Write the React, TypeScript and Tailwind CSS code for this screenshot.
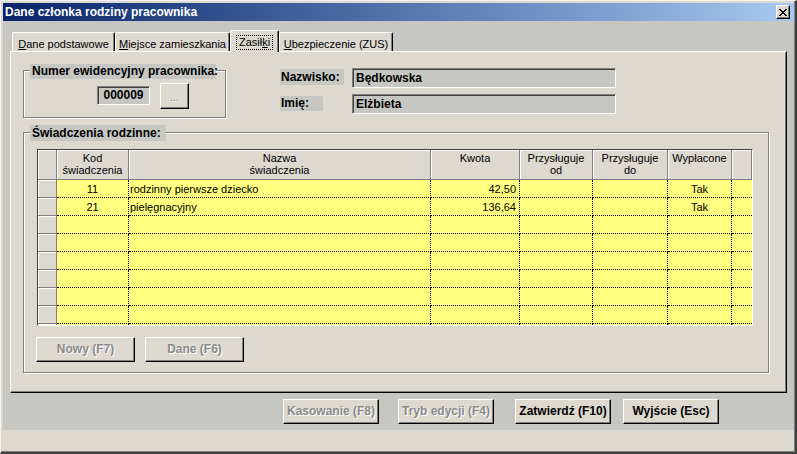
import React from "react";

type Row = { kod?: string; nazwa?: string; kwota?: string; od?: string; dd?: string; wyp?: string };

const rows: Row[] = [
  { kod: "11", nazwa: "rodzinny pierwsze dziecko", kwota: "42,50", wyp: "Tak" },
  { kod: "21", nazwa: "pielęgnacyjny", kwota: "136,64", wyp: "Tak" },
  {},
  {},
  {},
  {},
  {},
  {},
  {},
];

const headers: { w: string; lines: string[] }[] = [
  { w: "w-[19px]", lines: [] },
  { w: "w-[72px]", lines: ["Kod", "świadczenia"] },
  { w: "w-[302px]", lines: ["Nazwa", "świadczenia"] },
  { w: "w-[89px]", lines: ["Kwota"] },
  { w: "w-[73px]", lines: ["Przysługuje", "od"] },
  { w: "w-[75px]", lines: ["Przysługuje", "do"] },
  { w: "w-[64px]", lines: ["Wypłacone"] },
  { w: "w-[20px]", lines: [] },
];

const raised =
  "bg-[#ddd9d1] border border-t-white border-l-white border-r-black border-b-black shadow-[inset_-1px_-1px_0_#808080]";
const sunken =
  "bg-[#c6c7c3] border border-t-[#808080] border-l-[#808080] border-r-white border-b-white shadow-[inset_1px_1px_0_#404040]";
const frame =
  "border border-t-[#808080] border-l-[#808080] border-r-[#808080] border-b-[#808080] shadow-[1px_1px_0_#fff,inset_1px_1px_0_#fff]";

function Btn({ label, cls, disabled }: { label: string; cls: string; disabled?: boolean }) {
  return (
    <div
      className={`${cls} h-[25px] shrink-0 ${raised} font-bold text-[12px] leading-[23px] text-center whitespace-nowrap ${
        disabled ? "text-[#8a8a8a] [text-shadow:1px_1px_0_#fff]" : "text-black"
      }`}
    >
      {label}
    </div>
  );
}

function Tab({ children, cls }: { children: React.ReactNode; cls: string }) {
  return (
    <div
      className={`${cls} h-[19px] shrink-0 bg-[#ddd9d1] border-t border-l border-r border-t-white border-l-white border-r-black shadow-[inset_-1px_0_0_#808080] rounded-t-[2px] flex justify-center pt-[5px] leading-[13px] whitespace-nowrap`}
    >
      {children}
    </div>
  );
}

function DataCell({ w, last, children, align }: { w: string; last?: boolean; children?: React.ReactNode; align: string }) {
  return (
    <div
      className={`${w} h-[18px] shrink-0 overflow-hidden whitespace-nowrap leading-[19px] border-b border-dotted border-b-black ${
        last ? "" : "border-r border-r-black"
      } ${align}`}
    >
      {children}
    </div>
  );
}

export default function App() {
  return (
    <div className="w-[797px] h-[454px] overflow-hidden bg-[#ddd9d1] border-t border-l border-t-[#f6f4f0] border-l-[#f6f4f0] border-r-2 border-b-2 border-r-[#404040] border-b-[#404040] font-['Liberation_Sans',Arial,sans-serif] text-[11px] text-black">
      <div className="h-full flex flex-col border-r border-b border-r-[#808080] border-b-[#808080] pl-[2px] pt-[2px]">
        {/* Title bar */}
        <div className="h-[18px] shrink-0 flex items-center bg-linear-to-r from-[#0a246a] to-[#a6caf0] pl-[2px] pr-[4px]">
          <span className="flex-1 text-white font-bold text-[12px] leading-[18px] whitespace-nowrap">
            Dane członka rodziny pracownika
          </span>
          <div className={`w-[14px] h-[14px] flex items-center justify-center ${raised}`}>
            <svg width="8" height="7" viewBox="0 0 8 7" shapeRendering="crispEdges">
              <path
                fill="#000"
                d="M0 0h2v1H0z M6 0h2v1H6z M1 1h2v1H1z M5 1h2v1H5z M2 2h4v1H2z M3 3h2v1H3z M2 4h4v1H2z M1 5h2v1H1z M5 5h2v1H5z M0 6h2v1H0z M6 6h2v1H6z"
              />
            </svg>
          </div>
        </div>

        {/* Client panel */}
        <div className="h-[409px] shrink-0 bg-[#c6c7c3] px-[7px] pt-[9px] flex flex-col">
          {/* Tabs */}
          <div className="h-[21px] shrink-0 flex items-end pl-[2px]">
            <Tab cls="w-[103px]">
              <span>
                <span className="underline">D</span>ane podstawowe
              </span>
            </Tab>
            <Tab cls="w-[115px]">
              <span>
                <span className="underline">M</span>iejsce zamieszkania
              </span>
            </Tab>
            <div className="relative z-10 w-[49px] h-[22px] -mb-[1px] shrink-0 bg-[#ddd9d1] border-t border-l border-r border-t-white border-l-white border-r-black shadow-[inset_-1px_0_0_#808080] rounded-t-[2px] flex justify-center pt-[4px]">
              <span className="border border-dotted border-t-black border-l-black border-r-black border-b-black px-[2px] leading-[13px] h-[15px] whitespace-nowrap">
                Zasił<span className="underline">k</span>i
              </span>
            </div>
            <Tab cls="w-[114px]">
              <span>
                <span className="underline">U</span>bezpieczenie (ZUS)
              </span>
            </Tab>
          </div>

          {/* Tab page */}
          <div className="w-[777px] h-[342px] shrink-0 bg-[#ddd9d1] border-t border-l border-r border-b border-t-white border-l-white border-r-black border-b-black shadow-[inset_-1px_-1px_0_#808080] flex flex-col">
            {/* Top row */}
            <div className="flex items-start">
              <div className={`relative ml-[12px] mt-[18px] w-[203px] h-[48px] shrink-0 ${frame}`}>
                <div className="absolute -top-[7px] left-[6px] w-[186px] h-[15px] bg-[#c6c7c3] font-bold text-[12px] leading-[15px] pl-[2px] whitespace-nowrap">
                  Numer ewidencyjny pracownika:
                </div>
                <div className="flex items-start pl-[73px]">
                  <div className={`mt-[15px] w-[53px] h-[19px] shrink-0 ${sunken} text-center font-bold text-[12px] leading-[17px]`}>
                    000009
                  </div>
                  <div className={`ml-[10px] mt-[12px] w-[29px] h-[26px] shrink-0 ${raised} text-center text-[11px] leading-[26px] text-[#8a8a8a] [text-shadow:1px_1px_0_#fff]`}>
                    ...
                  </div>
                </div>
              </div>

              <div className="ml-[54px] mt-[16px] flex flex-col">
                <div className="flex items-start h-[20px]">
                  <div className="w-[72px] shrink-0">
                    <div className="mt-[1px] w-[64px] h-[16px] bg-[#c6c7c3] font-bold text-[12px] leading-[16px] pl-[1px] whitespace-nowrap">
                      Nazwisko:
                    </div>
                  </div>
                  <div className={`w-[264px] h-[20px] shrink-0 ${sunken} font-bold text-[12px] leading-[18px] pl-[3px]`}>
                    Będkowska
                  </div>
                </div>
                <div className="flex items-start h-[20px] mt-[6px]">
                  <div className="w-[72px] shrink-0">
                    <div className="mt-[2px] w-[43px] h-[15px] bg-[#c6c7c3] font-bold text-[12px] leading-[15px] pl-[1px] whitespace-nowrap">
                      Imię:
                    </div>
                  </div>
                  <div className={`w-[264px] h-[20px] shrink-0 ${sunken} font-bold text-[12px] leading-[18px] pl-[3px]`}>
                    Elżbieta
                  </div>
                </div>
              </div>
            </div>

            {/* Świadczenia group */}
            <div className={`relative ml-[12px] mt-[14px] w-[746px] h-[241px] shrink-0 ${frame} pl-[13px] pt-[16px]`}>
              <div className="absolute -top-[8px] left-[6px] w-[136px] h-[16px] bg-[#c6c7c3] font-bold text-[12px] leading-[16px] pl-[2px] whitespace-nowrap">
                Świadczenia rodzinne:
              </div>

              {/* Grid */}
              <div className="w-[716px] h-[177px] overflow-hidden border border-t-[#404040] border-l-[#404040] border-r-white border-b-white bg-[#ffff80]">
                <div className="flex">
                  {headers.map((h, i) => (
                    <div
                      key={i}
                      className={`${h.w} h-[30px] shrink-0 bg-[#ddd9d1] border-r border-b border-r-[#808080] border-b-[#808080] shadow-[inset_1px_1px_0_#fff] text-center leading-[12px] pt-[2px] whitespace-nowrap`}
                    >
                      {h.lines.map((l, j) => (
                        <div key={j}>{l}</div>
                      ))}
                    </div>
                  ))}
                </div>
                {rows.map((r, i) => (
                  <div key={i} className="flex">
                    <div className="w-[19px] h-[18px] shrink-0 bg-[#ddd9d1] border-r border-b border-r-[#808080] border-b-[#808080] shadow-[inset_1px_1px_0_#fff]" />
                    <DataCell w="w-[72px]" align="text-center">{r.kod}</DataCell>
                    <DataCell w="w-[302px]" align="text-left pl-[1px]">{r.nazwa}</DataCell>
                    <DataCell w="w-[89px]" align="text-right pr-[3px]">{r.kwota}</DataCell>
                    <DataCell w="w-[73px]" align="text-center">{r.od}</DataCell>
                    <DataCell w="w-[75px]" align="text-center">{r.dd}</DataCell>
                    <DataCell w="w-[64px]" align="text-center">{r.wyp}</DataCell>
                    <DataCell w="w-[20px]" align="" last />
                  </div>
                ))}
              </div>

              <div className="flex mt-[11px] -ml-[1px]">
                <Btn label="Nowy (F7)" cls="w-[99px]" disabled />
                <Btn label="Dane (F6)" cls="w-[99px] ml-[10px]" disabled />
              </div>
            </div>
          </div>

          {/* Bottom buttons */}
          <div className="flex mt-[6px] pl-[273px]">
            <Btn label="Kasowanie (F8)" cls="w-[96px]" disabled />
            <Btn label="Tryb edycji (F4)" cls="w-[96px] ml-[19px]" disabled />
            <Btn label="Zatwierdź (F10)" cls="w-[96px] ml-[21px]" />
            <Btn label="Wyjście (Esc)" cls="w-[96px] ml-[12px]" />
          </div>
        </div>
      </div>
    </div>
  );
}
